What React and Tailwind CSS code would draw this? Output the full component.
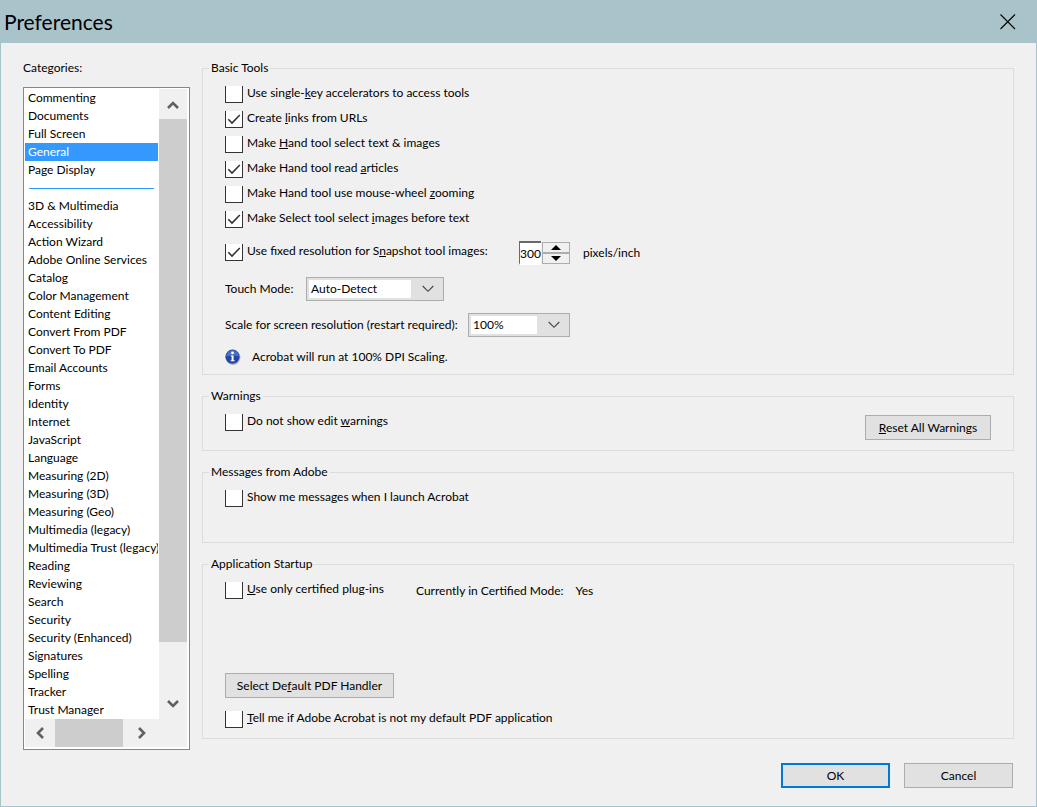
import React, { useState } from 'react';

const categories = [
  'Commenting',
  'Documents',
  'Full Screen',
  'General',
  'Page Display',
  null,
  '3D & Multimedia',
  'Accessibility',
  'Action Wizard',
  'Adobe Online Services',
  'Catalog',
  'Color Management',
  'Content Editing',
  'Convert From PDF',
  'Convert To PDF',
  'Email Accounts',
  'Forms',
  'Identity',
  'Internet',
  'JavaScript',
  'Language',
  'Measuring (2D)',
  'Measuring (3D)',
  'Measuring (Geo)',
  'Multimedia (legacy)',
  'Multimedia Trust (legacy)',
  'Reading',
  'Reviewing',
  'Search',
  'Security',
  'Security (Enhanced)',
  'Signatures',
  'Spelling',
  'Tracker',
  'Trust Manager',
];

function Arrow({ d }) {
  return (
    <svg width="12" height="12" viewBox="0 0 12 12" fill="none" stroke="#606060" strokeWidth="2.6">
      <path d={d} />
    </svg>
  );
}

// Square box with a caption, the access key is underlined by the caller
function Check({ id, defaultChecked = false, children }) {
  const [checked, setChecked] = useState(defaultChecked);

  return (
    <div className="flex items-start gap-1">
      <span className="mt-px grid h-[17px] w-[18px] shrink-0 border border-t-0 border-[#333] bg-white">
        <input
          id={id}
          type="checkbox"
          checked={checked}
          onChange={(e) => setChecked(e.target.checked)}
          className="col-start-1 row-start-1 h-4 w-4 appearance-none"
        />
        {checked && (
          <svg className="pointer-events-none col-start-1 row-start-1" width="16" height="16" viewBox="0 0 16 16" fill="none" stroke="#333" strokeWidth="1.6">
            <path d="M2.3 8.2 6 12 13.8 4" />
          </svg>
        )}
      </span>
      <label htmlFor={id} className="whitespace-nowrap">{children}</label>
    </div>
  );
}

function Group({ title, className, children }) {
  return (
    <fieldset className="border border-[#dcdcdc]">
      <legend className="ml-1.5 px-0.5">{title}</legend>
      <div className={className}>{children}</div>
    </fieldset>
  );
}

function DropDown({ id, width, options }) {
  return (
    <div className="flex h-6 items-center border border-[#adadad] bg-[#e1e1e1] p-0.5">
      <select id={id} className={`h-[18px] appearance-none bg-white pl-0.5 ${width}`}>
        {options.map((option) => (
          <option key={option}>{option}</option>
        ))}
      </select>
      <svg className="mr-[7px] ml-[11px]" width="12" height="8" viewBox="0 0 12 8" fill="none" stroke="#444" strokeWidth="1.1">
        <path d="M0.7 1 6 6.3 11.3 1" />
      </svg>
    </div>
  );
}

function PushButton({ className, children }) {
  return (
    <button type="button" className={`h-[25px] bg-[#e1e1e1] text-center whitespace-nowrap ${className}`}>
      {children}
    </button>
  );
}

function CategoryList() {
  const [selected, setSelected] = useState('General');

  return (
    <div className="border border-[#828790] bg-white p-px">
      <div className="flex">
        <ul aria-labelledby="categories" className="min-w-0 flex-1 overflow-hidden pr-px">
          {categories.map((name) =>
            name ? (
              <li key={name}>
                <button
                  type="button"
                  onClick={() => setSelected(name)}
                  className={`block h-[18px] w-full overflow-hidden pl-[3px] text-left whitespace-nowrap ${
                    name === selected ? 'bg-[#3399ff] text-white' : ''
                  }`}
                >
                  {name}
                </button>
              </li>
            ) : (
              <li key="separator" className="flex h-[18px] items-center px-1">
                <hr className="w-full border-[#3399ff]" />
              </li>
            )
          )}
        </ul>
        <div className="flex w-7 flex-col bg-[#f0f0f0]">
          <button type="button" aria-label="Scroll up" className="flex h-[30px] items-center justify-center">
            <Arrow d="M1 10 6 5 11 10" />
          </button>
          <div className="grow bg-[#cdcdcd]"></div>
          <div className="h-[47px]"></div>
          <button type="button" aria-label="Scroll down" className="flex h-[30px] items-center justify-center">
            <Arrow d="M1 3 6 8 11 3" />
          </button>
        </div>
        <div className="w-px"></div>
      </div>
      <div className="mr-px flex h-7 bg-[#f0f0f0]">
        <button type="button" aria-label="Scroll left" className="flex w-[30px] items-center justify-center">
          <Arrow d="M9 1 4 6 9 11" />
        </button>
        <div className="w-[68px] bg-[#cdcdcd]"></div>
        <button type="button" aria-label="Scroll right" className="ml-1 flex w-[30px] items-center justify-center">
          <Arrow d="M3 1 8 6 3 11" />
        </button>
      </div>
      <div className="h-px"></div>
    </div>
  );
}

function BasicTools() {
  const [resolution, setResolution] = useState(300);

  return (
    <Group title="Basic Tools" className="pt-[9px] pr-[22px] pb-[9px] pl-[22px]">
      <div className="flex flex-col gap-[7px]">
        <Check id="single-key">Use single-<u>k</u>ey accelerators to access tools</Check>
        <Check id="links" defaultChecked>Create <u>l</u>inks from URLs</Check>
        <Check id="hand-select">Make <u>H</u>and tool select text &amp; images</Check>
        <Check id="hand-read" defaultChecked>Make Hand tool read <u>a</u>rticles</Check>
        <Check id="hand-zoom">Make Hand tool use mouse-wheel <u>z</u>ooming</Check>
        <Check id="select-images" defaultChecked>Make Select tool select <u>i</u>mages before text</Check>
      </div>
      <div className="mt-[13px] flex h-6 items-center">
        <div className="w-[294px] pb-0.5">
          <Check id="fixed-resolution" defaultChecked>Use fixed resolution for S<u>n</u>apshot tool images:</Check>
        </div>
        <input
          id="resolution"
          type="text"
          aria-label="Resolution"
          value={resolution}
          onChange={(e) => setResolution(Number(e.target.value) || 0)}
          className="h-6 w-[22px] border-y-2 border-l border-t-[#696969] border-b-white border-l-[#696969] bg-white"
        />
        <div className="ml-px flex w-7 flex-col">
          <button
            type="button"
            aria-label="Increase"
            onClick={() => setResolution(resolution + 1)}
            className="flex h-[11px] items-center justify-center border border-[#adadad] bg-[#f0f0f0]"
          >
            <svg width="10" height="5" viewBox="0 0 10 5"><path d="M5 0 10 5H0Z" /></svg>
          </button>
          <button
            type="button"
            aria-label="Decrease"
            onClick={() => setResolution(resolution - 1)}
            className="flex h-[11px] items-center justify-center border border-[#adadad] bg-[#f0f0f0]"
          >
            <svg width="10" height="5" viewBox="0 0 10 5"><path d="M0 0H10L5 5Z" /></svg>
          </button>
        </div>
        <label htmlFor="resolution" className="ml-[13px]">pixels/inch</label>
      </div>
      <div className="mt-3 flex items-center">
        <label htmlFor="touch-mode" className="w-[81px]">Touch Mode:</label>
        <DropDown id="touch-mode" width="w-[102px]" options={['Auto-Detect', 'Never', 'Always']} />
      </div>
      <div className="mt-3 flex items-center">
        <label htmlFor="scale" className="w-[243px] whitespace-nowrap">Scale for screen resolution (restart required):</label>
        <DropDown id="scale" width="w-[66px]" options={['100%', '125%', '150%']} />
      </div>
      <div className="mt-3 flex items-center gap-[11px]">
        <svg width="16" height="16" viewBox="0 0 16 16">
          <circle cx="8" cy="8.5" r="7.4" fill="#b5b5b5" />
          <circle cx="7.5" cy="7.7" r="7.1" fill="#2345a8" />
          <path d="M1.2 7.5A6.3 6.3 0 0 1 13.8 7.5Q8 5.5 1.2 7.5Z" fill="#4a70c8" />
          <circle cx="7.5" cy="3.9" r="1.4" fill="#fff" />
          <path d="M5.8 6.4H8.6V11.3H9.6V12.3H5.6V11.3H6.6V7.4H5.8Z" fill="#fff" />
        </svg>
        <p>Acrobat will run at 100% DPI Scaling.</p>
      </div>
    </Group>
  );
}

export default function App() {
  return (
    <div className="flex min-h-screen flex-col border border-t-0 border-[#a9c3cb] bg-[#f0f0f0] font-['Lato','Open_Sans',sans-serif] text-[12px] leading-4 text-black">
      <header className="flex h-[43px] items-center justify-between bg-[#a9c3cb] pr-5 pl-[3px]">
        <h1 className="text-[21px] leading-7">Preferences</h1>
        <button type="button" aria-label="Close">
          <svg width="16" height="16" viewBox="0 0 16 16" fill="none" stroke="#000" strokeWidth="1.1">
            <path d="M0.5 0.5 15 15M15 0.5 0.5 15" />
          </svg>
        </button>
      </header>

      <main className="flex gap-3 px-[22px] pt-[17px]">
        <section className="w-[167px] shrink-0">
          <h2 id="categories" className="mb-[11px]">Cate<u>g</u>ories:</h2>
          <CategoryList />
        </section>

        <form className="flex min-w-0 flex-1 flex-col gap-[13px]">
          <BasicTools />

          <Group title="Warnings" className="flex items-start justify-between pt-[9px] pr-[22px] pb-2.5 pl-[22px]">
            <Check id="edit-warnings">Do not show edit <u>w</u>arnings</Check>
            <PushButton className="mt-0.5 w-[126px] border border-[#adadad]"><u>R</u>eset All Warnings</PushButton>
          </Group>

          <Group title="Messages from Adobe" className="px-[22px] pt-[9px] pb-[35px]">
            <Check id="messages">Show me messages when I launch Acrobat</Check>
          </Group>

          <Group title="Application Startup" className="px-[22px] pt-[9px] pb-2.5">
            <div className="flex items-start">
              <div className="w-[191px]">
                <Check id="certified"><u>U</u>se only certified plug-ins</Check>
              </div>
              <p className="mt-0.5">Currently in Certified Mode:</p>
              <p className="mt-0.5 ml-3">Yes</p>
            </div>
            <PushButton className="mt-[74px] mb-3 block w-[169px] border border-[#adadad]">Select De<u>f</u>ault PDF Handler</PushButton>
            <Check id="default-app"><u>T</u>ell me if Adobe Acrobat is not my default PDF application</Check>
          </Group>
        </form>
      </main>

      <footer className="mt-auto flex justify-end gap-3.5 pr-[23px] pb-[18px]">
        <PushButton className="w-[109px] border-2 border-[#0078d7]">OK</PushButton>
        <PushButton className="w-[109px] border border-[#adadad]">Cancel</PushButton>
      </footer>
    </div>
  );
}
